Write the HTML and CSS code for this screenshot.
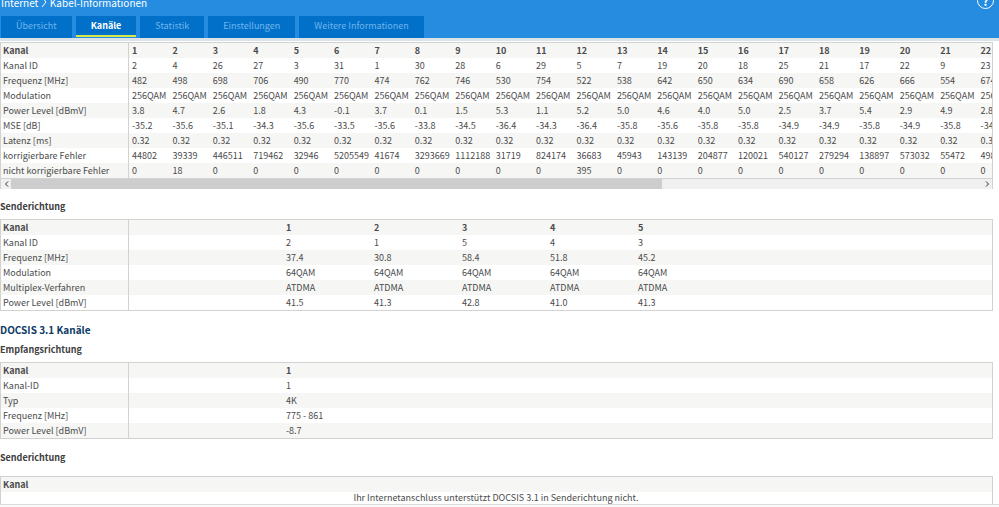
FILE: index.html
```html
<!DOCTYPE html>
<html lang="de">
<head>
    <meta charset="UTF-8">
    <meta name="viewport" content="width=device-width, initial-scale=1">
    <title>Kabel-Informationen</title>
    <link rel="stylesheet" href="styles.css">
</head>
<body>

<header>
    <div class="title-bar">
        <h1>Internet <svg class="chevron" viewBox="0 0 6 12"><path d="M1 1 L5 6 L1 11"/></svg> Kabel-Informationen</h1>
        <button type="button" class="help" aria-label="Hilfe">?</button>
    </div>
    <nav>
        <a href="#overview">Übersicht</a>
        <a href="#channels" class="active">Kanäle</a>
        <a href="#statistics">Statistik</a>
        <a href="#settings">Einstellungen</a>
        <a href="#more">Weitere Informationen</a>
    </nav>
</header>

<main>
    <!-- DOCSIS 3.0 downstream -->
    <div class="scroll-box">
        <div class="scroll-view">
            <table class="channels downstream" id="downstream">
                <colgroup><col class="label"></colgroup>
            </table>
        </div>
        <div class="scrollbar">
            <button type="button" aria-label="Nach links"><svg viewBox="0 0 5 6"><path d="M4 0.5 L1.5 3 L4 5.5"/></svg></button>
            <div class="track"><div class="thumb"></div></div>
            <button type="button" aria-label="Nach rechts"><svg viewBox="0 0 5 6"><path d="M1 0.5 L3.5 3 L1 5.5"/></svg></button>
        </div>
    </div>

    <!-- DOCSIS 3.0 upstream -->
    <h3>Senderichtung</h3>
    <table class="channels bordered">
        <colgroup><col class="label"><col class="spacer"><col class="value" span="5"><col></colgroup>
        <tr><th>Kanal</th><td></td><th>1</th><th>2</th><th>3</th><th>4</th><th>5</th><td></td></tr>
        <tr><td>Kanal ID</td><td></td><td>2</td><td>1</td><td>5</td><td>4</td><td>3</td><td></td></tr>
        <tr><td>Frequenz [MHz]</td><td></td><td>37.4</td><td>30.8</td><td>58.4</td><td>51.8</td><td>45.2</td><td></td></tr>
        <tr><td>Modulation</td><td></td><td>64QAM</td><td>64QAM</td><td>64QAM</td><td>64QAM</td><td>64QAM</td><td></td></tr>
        <tr><td>Multiplex-Verfahren</td><td></td><td>ATDMA</td><td>ATDMA</td><td>ATDMA</td><td>ATDMA</td><td>ATDMA</td><td></td></tr>
        <tr><td>Power Level [dBmV]</td><td></td><td>41.5</td><td>41.3</td><td>42.8</td><td>41.0</td><td>41.3</td><td></td></tr>
    </table>

    <h2>DOCSIS 3.1 Kanäle</h2>
    <h3 class="first">Empfangsrichtung</h3>
    <table class="channels bordered">
        <colgroup><col class="label"><col class="spacer"><col></colgroup>
        <tr><th>Kanal</th><td></td><th>1</th></tr>
        <tr><td>Kanal-ID</td><td></td><td>1</td></tr>
        <tr><td>Typ</td><td></td><td>4K</td></tr>
        <tr><td>Frequenz [MHz]</td><td></td><td>775 - 861</td></tr>
        <tr><td>Power Level [dBmV]</td><td></td><td>-8.7</td></tr>
    </table>

    <h3 class="last">Senderichtung</h3>
    <table class="channels bordered empty">
        <tr><th>Kanal</th></tr>
        <tr><td>Ihr Internetanschluss unterstützt DOCSIS 3.1 in Senderichtung nicht.</td></tr>
    </table>
</main>
<footer></footer>

<script src="channels.js"></script>
</body>
</html>
```
FILE: styles.css
```css
* {
    box-sizing: border-box;
}

body {
    margin: 0;
    background: #fff;
    color: #4b4b4b;
    font-family: "Noto Sans CJK SC", "Open Sans", sans-serif;
    font-size: 9px;
    line-height: 15px;
}

/* Header */
header {
    background: #258ce0;
    border-bottom: 3px solid #dbe3e8;
}

.title-bar {
    display: flex;
    justify-content: space-between;
    height: 16px;
    padding: 0 5px 0 1px;
}

h1 {
    margin: 0;
    font-size: 10px;
    font-weight: 400;
    line-height: 5px;
    color: #fff;
}

.chevron {
    width: 6px;
    height: 12px;
    margin: -5px 1px 0 0;
    vertical-align: middle;
    fill: none;
    stroke: #fff;
}

.help {
    width: 17px;
    height: 17px;
    margin-top: -8px;
    padding: 0;
    border: 1px solid #fff;
    border-radius: 50%;
    background: none;
    color: #fff;
    font-family: inherit;
    font-size: 12px;
    font-weight: 700;
    line-height: 15px;
}

nav {
    display: flex;
    gap: 4px;
    padding-left: 1px;
}

nav a {
    height: 22px;
    padding: 0 15px;
    background: #0070c8;
    color: #72b6ee;
    line-height: 20px;
    text-decoration: none;
}

nav a.active {
    height: 21px;
    border-bottom: 2px solid #d5e84a;
    color: #fff;
    font-weight: 700;
}

/* Content */
main {
    padding: 1px 6px 0 0;
}

h2 {
    margin: 11px 0 0;
    font-size: 10px;
    line-height: 16px;
    color: #0d3b66;
}

h3 {
    margin: 10px 0 5px;
    font-size: 9px;
    line-height: 15px;
    color: #404040;
}

h3.first {
    margin-top: 4px;
}

h3.last {
    margin: 11px 0;
}

/* Channel tables */
.channels {
    width: 100%;
    table-layout: fixed;
    border-collapse: separate;
    border-spacing: 0;
}

.channels th,
.channels td {
    height: 15px;
    padding: 0 3px;
    font-weight: 400;
    line-height: 15px;
    text-align: left;
    white-space: nowrap;
}

.channels th {
    font-weight: 700;
}

.channels tr:nth-child(odd) {
    background: #f6f6f4;
}

.channels tr > :first-child {
    border-right: 1px solid #d2d2d2;
    padding-left: 2px;
}

.channels .label {
    width: 128px;
}

.channels .spacer {
    width: 154px;
}

.channels .value {
    width: 88px;
}

.bordered {
    border: 1px solid #d2d2d2;
}

.empty {
    border-bottom: 0;
}

.empty tr > :first-child {
    border-right: 0;
}

.channels.empty td {
    height: 12px;
    line-height: 12px;
    text-align: center;
}

footer {
    height: 3px;
    border-top: 1px solid #dcdcdc;
    background: #fafafa;
}

/* Scrolling table */
.scroll-box {
    border: 1px solid #d2d2d2;
    border-bottom: 0;
}

.scroll-view {
    overflow: hidden;
}

.downstream {
    width: 1017px;
}

.scrollbar {
    display: flex;
    height: 11px;
    border-top: 1px solid #d2d2d2;
    background: #f0f0f0;
}

.scrollbar button {
    display: flex;
    align-items: center;
    justify-content: center;
    width: 10px;
    padding: 0;
    border: 0;
    background: none;
}

.scrollbar svg {
    width: 5px;
    height: 6px;
    fill: none;
    stroke: #333;
}

.track {
    flex: 1;
}

.thumb {
    width: 67%;
    height: 10px;
    background: #cdcdcd;
}
```
FILE: channels.js
```js
const rows = [
    ['Kanal', 1, 2, 3, 4, 5, 6, 7, 8, 9, 10, 11, 12, 13, 14, 15, 16, 17, 18, 19, 20, 21, 22],
    ['Kanal ID', 2, 4, 26, 27, 3, 31, 1, 30, 28, 6, 29, 5, 7, 19, 20, 18, 25, 21, 17, 22, 9, 23],
    ['Frequenz [MHz]', 482, 498, 698, 706, 490, 770, 474, 762, 746, 530, 754, 522, 538, 642, 650, 634, 690, 658, 626, 666, 554, 674],
    ['Modulation', ...Array(22).fill('256QAM')],
    ['Power Level [dBmV]', '3.8', '4.7', '2.6', '1.8', '4.3', '-0.1', '3.7', '0.1', '1.5', '5.3', '1.1', '5.2', '5.0', '4.6', '4.0', '5.0', '2.5', '3.7', '5.4', '2.9', '4.9', '2.8'],
    ['MSE [dB]', '-35.2', '-35.6', '-35.1', '-34.3', '-35.6', '-33.5', '-35.6', '-33.8', '-34.5', '-36.4', '-34.3', '-36.4', '-35.8', '-35.6', '-35.8', '-35.8', '-34.9', '-34.9', '-35.8', '-34.9', '-35.8', '-34.9'],
    ['Latenz [ms]', ...Array(22).fill('0.32')],
    ['korrigierbare Fehler', 44802, 39339, 446511, 719462, 32946, 5205549, 41674, 3293669, 1112188, 31719, 824174, 36683, 45943, 143139, 204877, 120021, 540127, 279294, 138897, 573032, 55472, 49800],
    ['nicht korrigierbare Fehler', 0, 18, 0, 0, 0, 0, 0, 0, 0, 0, 0, 395, 0, 0, 0, 0, 0, 0, 0, 0, 0, 0]
];

const table = document.getElementById('downstream');
const body = table.createTBody();

rows.forEach((row, index) => {
    const tr = body.insertRow();
    row.forEach(value => {
        const cell = document.createElement(index === 0 ? 'th' : 'td');
        cell.textContent = value;
        tr.appendChild(cell);
    });
});
```
